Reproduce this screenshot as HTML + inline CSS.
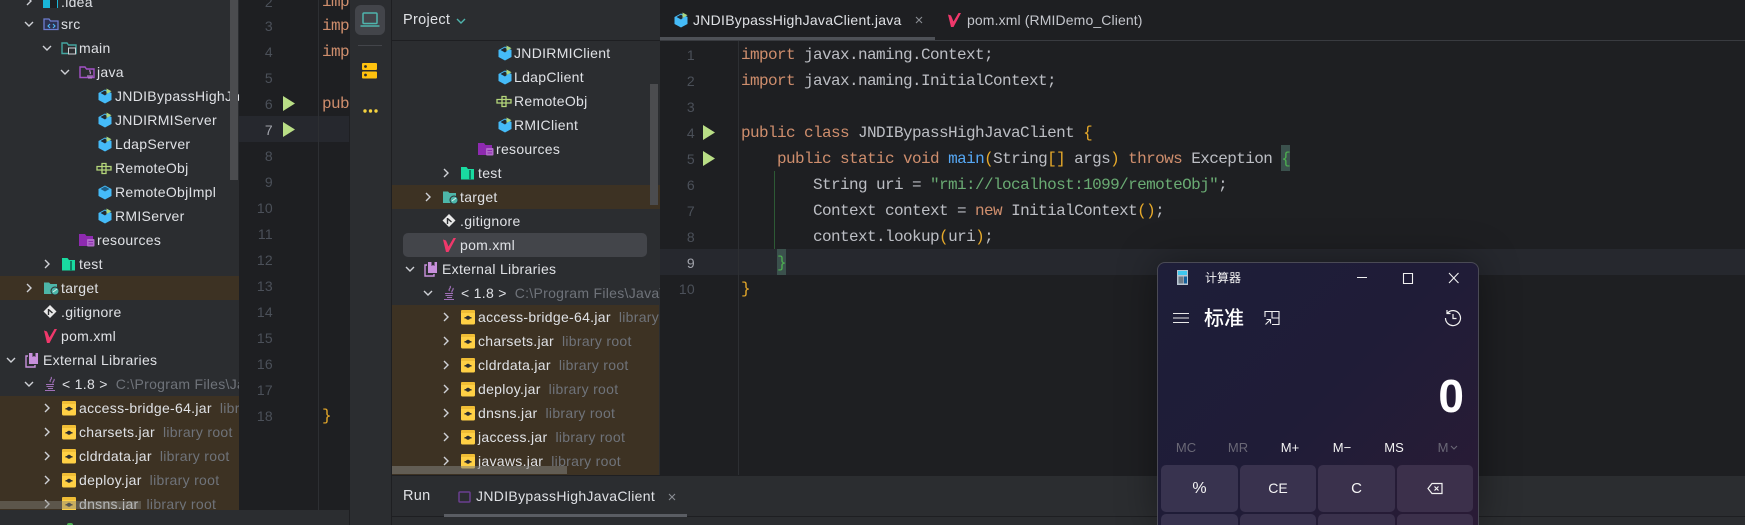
<!DOCTYPE html>
<html><head><meta charset="utf-8">
<style>
html,body{margin:0;padding:0;width:1745px;height:525px;overflow:hidden;background:#1e1f22}
body{position:relative;font-family:"Liberation Sans","Noto Sans CJK SC",sans-serif;color:#dfe1e5}
div,svg{position:absolute}
.i{width:16px;height:16px;overflow:visible}
.t{height:24px;line-height:24px;white-space:nowrap;font-size:14px;letter-spacing:.3px}
.t span,.g{color:#6f737a}
.t span{margin-left:8px}
.ch{width:10px;height:10px;overflow:visible;fill:none;stroke:#cfd1d6;stroke-width:1.4}
.p{background:#2b2d30;overflow:hidden}
.br{background:#3d3223}
.n{width:40px;text-align:right;font:14px/26px "Liberation Sans",sans-serif;color:#4b5059;height:26px;letter-spacing:.3px}
.c{font:16px/26px "Liberation Mono",monospace;letter-spacing:-.6px;color:#bcbec4;white-space:pre;height:26px}
.k{color:#cf8e6d}.s{color:#6aab73}.m{color:#56a8f5}.b{color:#e6a92a}
.mm{width:44px;text-align:center;font-size:13px;line-height:18px;height:18px;top:439px;color:#f2f2f2}
.bt{height:47px;width:77px;top:465px;border-radius:5px;background:#39324f;text-align:center;line-height:47px;font-size:14px;color:#f5f5f5}
.bt2{top:514px;height:11px;border-radius:5px 5px 0 0}
</style></head><body>
<svg width="0" height="0" style="position:absolute">
<defs>
<symbol id="c" viewBox="0 0 16 16"><path d="M8 1.500L14.500 5V12L8 15.500L1.500 12V5Z" fill="#45bbf8"/><path d="M3.500 5L8 2.500L11 5L8 7.500Z" fill="#1f2a33"/><path d="M9.500 .5L14.500 3.200L9.500 6Z" fill="#a9d57f"/></symbol>
<symbol id="co" viewBox="0 0 16 16"><path d="M8 1.500L14.500 5V12L8 15.500L1.500 12V5Z" fill="#45bbf8"/><path d="M3.500 5L8 2.500L12.500 5L8 7.500Z" fill="#1f5f86"/></symbol>
<symbol id="if" viewBox="0 0 16 16"><path d="M6 3.500h4v3h5v3.500h-5v3.500H6V10H1V6.500h5Z" fill="none" stroke="#b4d67a" stroke-width="1.300"/><path d="M6 6.500h4V10H6Z" fill="none" stroke="#b4d67a" stroke-width="1.300"/></symbol>
<symbol id="src" viewBox="0 0 16 16"><path d="M1 3h5l1.500 2H15v8.500H1Z" fill="#2d3250" stroke="#6e7ed0" stroke-width="1.300"/><path d="M7 8l-2 2 2 2M10 8l2 2-2 2" fill="none" stroke="#4db8f8" stroke-width="1.100"/></symbol>
<symbol id="main" viewBox="0 0 16 16"><path d="M1 3h5l1.500 2H15v8.500H1Z" fill="none" stroke="#44a5a0" stroke-width="1.400"/><rect x="7.500" y="8" width="7" height="6" fill="#2b2d30" stroke="#cfd1d6"/></symbol>
<symbol id="java" viewBox="0 0 16 16"><path d="M1 3h5l1.500 2H15v8.500H1Z" fill="none" stroke="#a452c8" stroke-width="1.400"/><path d="M11 6c-1 2 1.500 2 0 4M8 12h6M9 14h4" fill="none" stroke="#c78fdc" stroke-width="1.100"/></symbol>
<symbol id="res" viewBox="0 0 16 16"><path d="M0 2h6l1.500 2H14v10H0Z" fill="#8e2ab0"/><rect x="8" y="7" width="7.500" height="7.500" rx="1" fill="#b06ac9"/><path d="M9.500 9.500h4.500M9.500 12h4.500" stroke="#8e2ab0"/></symbol>
<symbol id="test" viewBox="0 0 16 16"><path d="M1 2h5.500L8 4h6v10.500H1Z" fill="#19dba0"/><path d="M10 5v10" stroke="#0f7f62" stroke-width="2"/></symbol>
<symbol id="tar" viewBox="0 0 16 16"><path d="M1 2.500h5L7.500 4H14v10H1Z" fill="#4db6a8"/><circle cx="12" cy="11" r="4" fill="#4db6a8" stroke="#2b2d30"/><path d="M10 12l4-3" stroke="#d5f0ec"/></symbol>
<symbol id="git" viewBox="0 0 16 16"><path d="M7 1l6.500 6.500L7 14 .5 7.500Z" fill="#e8e8e8"/><path d="M5.500 5v6M5.500 5.500L9.500 9" stroke="#2b2d30" stroke-width="1.400"/></symbol>
<symbol id="pom" viewBox="0 0 16 16"><path d="M1 2.500L4 3.500 6.500 9.500 11.500 1 14 1 6.500 15 4 15Z" fill="#f0386b"/></symbol>
<symbol id="lib" viewBox="0 0 16 16"><path d="M3 4H1v11h9v-2" fill="none" stroke="#c890dc" stroke-width="1.400"/><path d="M4 1h9v11H4Z" fill="#c890dc"/><path d="M7.500 1v4l1.500-1 1.500 1V1" fill="#2b2d30"/></symbol>
<symbol id="jdk" viewBox="0 0 16 16"><path d="M8 1c2 2-2.500 3-.5 5M11 3c1 2-2 2.500-1 4.500" fill="none" stroke="#a070b8" stroke-width="1.100"/><path d="M3 8.500h8M3.500 10.500h7M5 12.500h5M2 14.500h10" stroke="#a070b8" stroke-width="1.100"/></symbol>
<symbol id="jar" viewBox="0 0 16 16"><path d="M1 3h14v11a1.500 1.500 0 0 1-1.500 1.500h-11A1.500 1.500 0 0 1 1 14Z" fill="#ffd045"/><path d="M2 1h12a1 1 0 0 1 1 1v2H1V2a1 1 0 0 1 1-1Z" fill="#f0bd35"/><path d="M4.500 8.800h7" stroke="#2b2d30" stroke-width="1.500"/><circle cx="8" cy="8.800" r="2" fill="#2b2d30"/></symbol>
<symbol id="r" viewBox="0 0 10 10"><path d="M3 1l4 4-4 4"/></symbol>
<symbol id="d" viewBox="0 0 10 10"><path d="M1 3l4 4 4-4"/></symbol>
</defs></svg>

<!-- left panel -->
<div class="p" style="left:0;top:0;width:239px;height:510px">
<div class="br" style="left:0;top:276px;width:239px;height:24px"></div>
<div class="br" style="left:0;top:396px;width:239px;height:114px"></div>
<svg class="ch" style="left:24px;top:-4px"><use href="#r"/></svg>
<svg class="i" style="left:43px;top:-6px" viewBox="0 0 16 16"><path d="M0 1h6l1 2h8v11H0Z" fill="#19b6d8"/><rect x="7" y="6" width="7" height="8" fill="#1e1f22"/></svg>
<div class="t" style="left:61px;top:-10px">.idea</div>
<svg class="ch" style="left:24px;top:19px"><use href="#d"/></svg><svg class="i" style="left:43px;top:16px"><use href="#src"/></svg><div class="t" style="left:61px;top:12px">src</div>
<svg class="ch" style="left:42px;top:43px"><use href="#d"/></svg><svg class="i" style="left:61px;top:40px"><use href="#main"/></svg><div class="t" style="left:79px;top:36px">main</div>
<svg class="ch" style="left:60px;top:67px"><use href="#d"/></svg><svg class="i" style="left:79px;top:64px"><use href="#java"/></svg><div class="t" style="left:97px;top:60px">java</div>
<svg class="i" style="left:97px;top:88px"><use href="#c"/></svg><div class="t" style="left:115px;top:84px">JNDIBypassHighJavaClient</div>
<svg class="i" style="left:97px;top:112px"><use href="#c"/></svg><div class="t" style="left:115px;top:108px">JNDIRMIServer</div>
<svg class="i" style="left:97px;top:136px"><use href="#c"/></svg><div class="t" style="left:115px;top:132px">LdapServer</div>
<svg class="i" style="left:96px;top:160px"><use href="#if"/></svg><div class="t" style="left:115px;top:156px">RemoteObj</div>
<svg class="i" style="left:97px;top:184px"><use href="#co"/></svg><div class="t" style="left:115px;top:180px">RemoteObjImpl</div>
<svg class="i" style="left:97px;top:208px"><use href="#c"/></svg><div class="t" style="left:115px;top:204px">RMIServer</div>
<svg class="i" style="left:79px;top:232px"><use href="#res"/></svg><div class="t" style="left:97px;top:228px">resources</div>
<svg class="ch" style="left:42px;top:259px"><use href="#r"/></svg><svg class="i" style="left:61px;top:256px"><use href="#test"/></svg><div class="t" style="left:79px;top:252px">test</div>
<svg class="ch" style="left:24px;top:283px"><use href="#r"/></svg><svg class="i" style="left:43px;top:280px"><use href="#tar"/></svg><div class="t" style="left:61px;top:276px">target</div>
<svg class="i" style="left:43px;top:304px"><use href="#git"/></svg><div class="t" style="left:61px;top:300px">.gitignore</div>
<svg class="i" style="left:43px;top:328px"><use href="#pom"/></svg><div class="t" style="left:61px;top:324px">pom.xml</div>
<svg class="ch" style="left:6px;top:355px"><use href="#d"/></svg><svg class="i" style="left:25px;top:352px"><use href="#lib"/></svg><div class="t" style="left:43px;top:348px">External Libraries</div>
<svg class="ch" style="left:24px;top:379px"><use href="#d"/></svg><svg class="i" style="left:43px;top:376px"><use href="#jdk"/></svg><div class="t" style="left:62px;top:372px">&lt; 1.8 &gt;<span>C:\Program Files\Java\jdk1.8</span></div>
<svg class="ch" style="left:42px;top:403px"><use href="#r"/></svg><svg class="i" style="left:61px;top:400px"><use href="#jar"/></svg><div class="t" style="left:79px;top:396px">access-bridge-64.jar<span>library root</span></div>
<svg class="ch" style="left:42px;top:427px"><use href="#r"/></svg><svg class="i" style="left:61px;top:424px"><use href="#jar"/></svg><div class="t" style="left:79px;top:420px">charsets.jar<span>library root</span></div>
<svg class="ch" style="left:42px;top:451px"><use href="#r"/></svg><svg class="i" style="left:61px;top:448px"><use href="#jar"/></svg><div class="t" style="left:79px;top:444px">cldrdata.jar<span>library root</span></div>
<svg class="ch" style="left:42px;top:475px"><use href="#r"/></svg><svg class="i" style="left:61px;top:472px"><use href="#jar"/></svg><div class="t" style="left:79px;top:468px">deploy.jar<span>library root</span></div>
<svg class="ch" style="left:42px;top:499px"><use href="#r"/></svg><svg class="i" style="left:61px;top:496px"><use href="#jar"/></svg><div class="t" style="left:79px;top:492px">dnsns.jar<span>library root</span></div>
<div style="left:230px;top:0;width:8px;height:180px;background:#4b4c4f"></div>
<div style="left:0;top:501px;width:141px;height:8px;background:rgba(130,130,125,.45)"></div>
</div>
<div style="left:0;top:510px;width:350px;height:15px;background:#2b2d30"></div>
<div style="left:67px;top:523px;width:6px;height:2px;border-radius:3px 3px 0 0;background:#4caf50"></div>

<!-- left editor -->
<div style="left:239px;top:116px;width:111px;height:26px;background:#26282e"></div>
<div style="left:318px;top:0;width:1px;height:510px;background:#2d2f33"></div>
<div class="n" style="left:233px;top:-11px">2</div><div class="n" style="left:233px;top:13px">3</div><div class="n" style="left:233px;top:39px">4</div><div class="n" style="left:233px;top:65px">5</div><div class="n" style="left:233px;top:91px">6</div><div class="n" style="left:233px;top:117px;color:#a1a3ab">7</div><div class="n" style="left:233px;top:143px">8</div><div class="n" style="left:233px;top:169px">9</div><div class="n" style="left:233px;top:195px">10</div><div class="n" style="left:233px;top:221px">11</div><div class="n" style="left:233px;top:247px">12</div><div class="n" style="left:233px;top:273px">13</div><div class="n" style="left:233px;top:299px">14</div><div class="n" style="left:233px;top:325px">15</div><div class="n" style="left:233px;top:351px">16</div><div class="n" style="left:233px;top:377px">17</div><div class="n" style="left:233px;top:403px">18</div>
<svg style="left:283px;top:96px;width:13px;height:15px"><path d="M0 0L12 7.500L0 15Z" fill="#b9de86"/></svg>
<svg style="left:283px;top:122px;width:13px;height:15px"><path d="M0 0L12 7.500L0 15Z" fill="#b9de86"/></svg>
<div style="left:320px;top:0;width:29px;height:510px;overflow:hidden">
<div class="c k" style="left:2px;top:-11px">import</div><div class="c k" style="left:2px;top:13px">import</div><div class="c k" style="left:2px;top:39px">import</div><div class="c k" style="left:2px;top:91px">public</div><div class="c b" style="left:2px;top:403px">}</div>
</div>

<!-- tool strip -->
<div style="left:349px;top:0;width:1px;height:525px;background:#1e1f22"></div>
<div style="left:350px;top:0;width:41px;height:525px;background:#2b2d30"></div>
<div style="left:391px;top:0;width:1px;height:525px;background:#1e1f22"></div>
<div style="left:355px;top:5px;width:30px;height:30px;border-radius:6px;background:#43454a"></div>
<svg style="left:360px;top:11px;width:20px;height:17px" fill="none" stroke="#4fb5ad" stroke-width="1.500"><rect x="3" y="2" width="14" height="10.500" rx="1"/><path d="M.5 15h19"/></svg>
<div style="left:358px;top:45px;width:24px;height:1px;background:#43454a"></div>
<svg style="left:362px;top:63px;width:16px;height:16px"><rect width="15" height="7" rx="1" fill="#ffc20e"/><rect y="8.500" width="15" height="7" rx="1" fill="#ffc20e"/><circle cx="3.500" cy="3.500" r="1.400" fill="#2b2d30"/><circle cx="3.500" cy="12" r="1.400" fill="#2b2d30"/></svg>
<svg style="left:363px;top:108px;width:15px;height:6px"><circle cx="2" cy="3" r="1.700" fill="#f5d33f"/><circle cx="7.500" cy="3" r="1.700" fill="#f5d33f"/><circle cx="13" cy="3" r="1.700" fill="#f5d33f"/></svg>

<!-- project panel -->
<div class="p" style="left:392px;top:0;width:268px;height:475px">
<div class="t" style="left:11px;top:8px;font-size:14.500px;color:#dfe1e5">Project</div>
<svg class="ch" style="left:64px;top:16px;stroke:#4fb5ad"><use href="#d"/></svg>
<div style="left:0;top:40px;width:268px;height:1px;background:#1e1f22"></div>
<div class="br" style="left:0;top:185px;width:268px;height:24px"></div>
<div class="br" style="left:0;top:305px;width:267px;height:170px"></div>
<div style="left:11px;top:233px;width:244px;height:24px;border-radius:5px;background:#43454a"></div>
<svg class="i" style="left:105px;top:45px"><use href="#c"/></svg><div class="t" style="left:122px;top:41px">JNDIRMIClient</div>
<svg class="i" style="left:105px;top:69px"><use href="#c"/></svg><div class="t" style="left:122px;top:65px">LdapClient</div>
<svg class="i" style="left:104px;top:93px"><use href="#if"/></svg><div class="t" style="left:122px;top:89px">RemoteObj</div>
<svg class="i" style="left:105px;top:117px"><use href="#c"/></svg><div class="t" style="left:122px;top:113px">RMIClient</div>
<svg class="i" style="left:86px;top:141px"><use href="#res"/></svg><div class="t" style="left:104px;top:137px">resources</div>
<svg class="ch" style="left:49px;top:168px"><use href="#r"/></svg><svg class="i" style="left:68px;top:165px"><use href="#test"/></svg><div class="t" style="left:86px;top:161px">test</div>
<svg class="ch" style="left:31px;top:192px"><use href="#r"/></svg><svg class="i" style="left:50px;top:189px"><use href="#tar"/></svg><div class="t" style="left:68px;top:185px">target</div>
<svg class="i" style="left:50px;top:213px"><use href="#git"/></svg><div class="t" style="left:68px;top:209px">.gitignore</div>
<svg class="i" style="left:50px;top:237px"><use href="#pom"/></svg><div class="t" style="left:68px;top:233px">pom.xml</div>
<svg class="ch" style="left:13px;top:264px"><use href="#d"/></svg><svg class="i" style="left:32px;top:261px"><use href="#lib"/></svg><div class="t" style="left:50px;top:257px">External Libraries</div>
<svg class="ch" style="left:31px;top:288px"><use href="#d"/></svg><svg class="i" style="left:50px;top:285px"><use href="#jdk"/></svg><div class="t" style="left:69px;top:281px">&lt; 1.8 &gt;<span>C:\Program Files\Java\jdk1.8</span></div>
<svg class="ch" style="left:49px;top:312px"><use href="#r"/></svg><svg class="i" style="left:68px;top:309px"><use href="#jar"/></svg><div class="t" style="left:86px;top:305px">access-bridge-64.jar<span>library root</span></div>
<svg class="ch" style="left:49px;top:336px"><use href="#r"/></svg><svg class="i" style="left:68px;top:333px"><use href="#jar"/></svg><div class="t" style="left:86px;top:329px">charsets.jar<span>library root</span></div>
<svg class="ch" style="left:49px;top:360px"><use href="#r"/></svg><svg class="i" style="left:68px;top:357px"><use href="#jar"/></svg><div class="t" style="left:86px;top:353px">cldrdata.jar<span>library root</span></div>
<svg class="ch" style="left:49px;top:384px"><use href="#r"/></svg><svg class="i" style="left:68px;top:381px"><use href="#jar"/></svg><div class="t" style="left:86px;top:377px">deploy.jar<span>library root</span></div>
<svg class="ch" style="left:49px;top:408px"><use href="#r"/></svg><svg class="i" style="left:68px;top:405px"><use href="#jar"/></svg><div class="t" style="left:86px;top:401px">dnsns.jar<span>library root</span></div>
<svg class="ch" style="left:49px;top:432px"><use href="#r"/></svg><svg class="i" style="left:68px;top:429px"><use href="#jar"/></svg><div class="t" style="left:86px;top:425px">jaccess.jar<span>library root</span></div>
<svg class="ch" style="left:49px;top:456px"><use href="#r"/></svg><svg class="i" style="left:68px;top:453px"><use href="#jar"/></svg><div class="t" style="left:86px;top:449px">javaws.jar<span>library root</span></div>
<div style="left:258px;top:84px;width:8px;height:121px;background:#4b4c4f"></div>
<div style="left:0;top:466px;width:175px;height:8px;background:rgba(130,130,125,.55)"></div>
</div>

<!-- editor -->
<div style="left:660px;top:0;width:1085px;height:40px;background:#1e1f22"></div>
<div style="left:660px;top:40px;width:1085px;height:1px;background:#393b40"></div>
<div style="left:660px;top:37px;width:275px;height:3px;background:#4e5157"></div>
<svg class="i" style="left:673px;top:12px"><use href="#c"/></svg>
<div class="t" style="left:693px;top:8px;font-size:14px;letter-spacing:.27px">JNDIBypassHighJavaClient.java</div>
<svg style="left:915px;top:16px;width:8px;height:8px" stroke="#8a8d93" stroke-width="1.100"><path d="M1 1l6 6M7 1l-6 6"/></svg>
<svg class="i" style="left:947px;top:12px"><use href="#pom"/></svg>
<div class="t" style="left:967px;top:8px;color:#c4c6cc;letter-spacing:.12px">pom.xml (RMIDemo_Client)</div>

<div style="left:660px;top:249px;width:1085px;height:26px;background:#26282e"></div>
<div style="left:738px;top:41px;width:1px;height:435px;background:#2d2f33"></div>
<div style="left:774px;top:171px;width:1px;height:78px;background:#2d5a35"></div>
<div style="left:777px;top:249px;width:9px;height:26px;background:#3b514d"></div>
<div style="left:1281px;top:145px;width:9px;height:26px;background:#3b514d"></div>
<div class="n" style="left:655px;top:42px">1</div><div class="n" style="left:655px;top:68px">2</div><div class="n" style="left:655px;top:94px">3</div><div class="n" style="left:655px;top:120px">4</div><div class="n" style="left:655px;top:146px">5</div><div class="n" style="left:655px;top:172px">6</div><div class="n" style="left:655px;top:198px">7</div><div class="n" style="left:655px;top:224px">8</div><div class="n" style="left:655px;top:250px;color:#a1a3ab">9</div><div class="n" style="left:655px;top:276px">10</div>
<svg style="left:703px;top:125px;width:13px;height:15px"><path d="M0 0L12 7.500L0 15Z" fill="#b9de86"/></svg>
<svg style="left:703px;top:151px;width:13px;height:15px"><path d="M0 0L12 7.500L0 15Z" fill="#b9de86"/></svg>
<div class="c" style="left:741px;top:42px"><span class="k">import</span> javax.naming.Context;</div>
<div class="c" style="left:741px;top:68px"><span class="k">import</span> javax.naming.InitialContext;</div>
<div class="c" style="left:741px;top:120px"><span class="k">public class</span> JNDIBypassHighJavaClient <span class="b">{</span></div>
<div class="c" style="left:741px;top:146px">    <span class="k">public static void</span> <span class="m">main</span><span class="b">(</span>String<span class="b">[]</span> args<span class="b">)</span> <span class="k">throws</span> Exception <span style="color:#4caf50">{</span></div>
<div class="c" style="left:741px;top:172px">        String uri = <span class="s">"rmi://localhost:1099/remoteObj"</span>;</div>
<div class="c" style="left:741px;top:198px">        Context context = <span class="k">new</span> InitialContext<span class="b">()</span>;</div>
<div class="c" style="left:741px;top:224px">        context.lookup<span class="b">(</span>uri<span class="b">)</span>;</div>
<div class="c" style="left:741px;top:250px;color:#4caf50">    }</div>
<div class="c b" style="left:741px;top:276px">}</div>

<!-- run bar -->
<div style="left:392px;top:475px;width:1353px;height:1px;background:#1e1f22"></div>
<div style="left:392px;top:476px;width:1353px;height:49px;background:#2b2d30"></div>
<div class="t" style="left:403px;top:484px;font-size:14.500px">Run</div>
<svg style="left:458px;top:491px;width:13px;height:12px"><rect x="1" y="1" width="11" height="10" rx="1" fill="none" stroke="#6b3f8f" stroke-width="1.500"/></svg>
<div class="t" style="left:476px;top:484px;letter-spacing:.33px">JNDIBypassHighJavaClient</div>
<svg style="left:668px;top:493px;width:8px;height:8px" stroke="#8a8d93" stroke-width="1.100"><path d="M1 1l6 6M7 1l-6 6"/></svg>
<div style="left:392px;top:516px;width:1353px;height:1px;background:#1e1f22"></div>
<div style="left:444px;top:514px;width:243px;height:3px;background:#5a5d63"></div>

<!-- calculator -->
<div style="left:1157px;top:262px;width:320px;height:263px;border:1px solid #4a4a55;border-bottom:0;box-sizing:content-box;border-radius:8px 8px 0 0;background:linear-gradient(135deg,#1e1e39 0%,#1f1c37 50%,#2a1b36 100%);box-shadow:0 0 40px rgba(0,0,0,.4)"></div>
<svg style="left:1177px;top:270px;width:12px;height:16px"><rect width="11" height="15" fill="#b9c6d2"/><rect x="1" y="1" width="9" height="4" fill="#3fc8ef"/><rect x="1.500" y="6.500" width="5" height="7" fill="#6e7c88"/><rect x="7" y="6.500" width="3" height="7" fill="#14609a"/></svg>
<div style="left:1205px;top:270px;font-size:12px;line-height:16px;color:#f5f5f5;white-space:nowrap">计算器</div>
<svg style="left:1350px;top:270px;width:120px;height:18px" fill="none" stroke="#f0f0f0" stroke-width="1.100"><path d="M7 7.500h10M53.500 3.500h9v10h-9ZM99 3l9.500 10M108.500 3L99 13"/></svg>
<svg style="left:1173px;top:312px;width:16px;height:12px" stroke="#e8e8e8" stroke-width="1"><path d="M0 1.500h16M0 6h16M0 10.500h16"/></svg>
<div style="left:1204px;top:306px;font-size:20px;line-height:26px;font-weight:500;color:#fff;white-space:nowrap">标准</div>
<svg style="left:1264px;top:310px;width:16px;height:16px" fill="none" stroke="#f0f0f0" stroke-width="1.100"><path d="M1 7V1.500h14v13H8M8 1.500V8h7M1.500 14.500L6 10M2.500 9.500H6.500V13.500"/></svg>
<svg style="left:1444px;top:309px;width:18px;height:18px" fill="none" stroke="#f0f0f0" stroke-width="1.200"><path d="M3.500 4A7.500 7.500 0 1 1 1.500 9M3 1v3.500h3.500M9 5v4.500h3.500"/></svg>
<div style="left:1400px;top:370px;width:64px;text-align:right;font-size:46px;line-height:52px;font-weight:bold;color:#fff">0</div>
<div class="mm" style="left:1164px;color:#6a6876">MC</div>
<div class="mm" style="left:1216px;color:#6a6876">MR</div>
<div class="mm" style="left:1268px">M+</div>
<div class="mm" style="left:1320px">M−</div>
<div class="mm" style="left:1372px">MS</div>
<div class="mm" style="left:1421px;color:#6a6876">M</div>
<svg style="left:1450px;top:445px;width:8px;height:6px" fill="none" stroke="#6a6876" stroke-width="1.100"><path d="M1 1l3 3 3-3"/></svg>
<div class="bt" style="left:1161px;background:#38334f;font-size:16px">%</div>
<div class="bt" style="left:1240px;width:76px;background:#39324e">CE</div>
<div class="bt" style="left:1318px;background:#3a314c;font-size:15px">C</div>
<div class="bt" style="left:1397px;width:76px;background:#3c304b"></div>
<svg style="left:1427px;top:482px;width:16px;height:13px" fill="none" stroke="#f2f2f2" stroke-width="1.200"><path d="M5 1.500h10v10H5L1 6.500ZM7.500 4.500l4 4M11.500 4.500l-4 4"/></svg>
<div class="bt bt2" style="left:1161px;background:#38334f"></div>
<div class="bt bt2" style="left:1240px;width:76px;background:#39324e"></div>
<div class="bt bt2" style="left:1318px;background:#3a314c"></div>
<div class="bt bt2" style="left:1397px;width:76px;background:#3c304b"></div>
</body></html>
